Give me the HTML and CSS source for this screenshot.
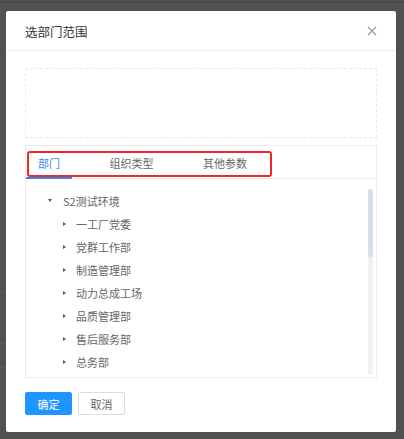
FILE: index.html
```html
<!DOCTYPE html>
<html lang="zh-CN">
<head>
<meta charset="utf-8">
<title>选部门范围</title>
<link rel="stylesheet" href="styles.css">
</head>
<body>
<div class="mask">
  <div class="dialog">
    <div class="dialog-header">
      <span class="dialog-title">选部门范围</span>
      <svg class="dialog-close" width="10" height="10" viewBox="0 0 10 10">
        <path d="M1 1 L9 9 M9 1 L1 9" stroke="#999" stroke-width="1.2" fill="none"/>
      </svg>
    </div>
    <div class="dialog-body">
      <div class="selected-box"></div>
      <div class="tabs">
        <div class="tab-nav">
          <div class="tab active">部门</div>
          <div class="tab">组织类型</div>
          <div class="tab">其他参数</div>
          <div class="tab-highlight"></div>
        </div>
        <div class="tab-pane">
          <ul class="tree">
            <li class="node root"><span class="caret down"></span><span class="label">S2测试环境</span></li>
            <li class="node child"><span class="caret right"></span><span class="label">一工厂党委</span></li>
            <li class="node child"><span class="caret right"></span><span class="label">党群工作部</span></li>
            <li class="node child"><span class="caret right"></span><span class="label">制造管理部</span></li>
            <li class="node child"><span class="caret right"></span><span class="label">动力总成工场</span></li>
            <li class="node child"><span class="caret right"></span><span class="label">品质管理部</span></li>
            <li class="node child"><span class="caret right"></span><span class="label">售后服务部</span></li>
            <li class="node child"><span class="caret right"></span><span class="label">总务部</span></li>
          </ul>
          <div class="scrollbar"><div class="scroll-thumb"></div></div>
        </div>
      </div>
    </div>
    <div class="dialog-footer">
      <button class="btn btn-primary">确定</button>
      <button class="btn">取消</button>
    </div>
  </div>
</div>
</body>
</html>
```
FILE: styles.css
```css
* { box-sizing: border-box; }
html, body {
  margin: 0;
  padding: 0;
  width: 404px;
  height: 439px;
  overflow: hidden;
}
body {
  font-family: "Noto Sans CJK SC", "Noto Sans", sans-serif;
  background: #515151;
}
.mask {
  width: 404px;
  height: 439px;
  padding: 11px 0 0 6px;
  background:
    linear-gradient(#464646, #464646) 0 2px / 404px 1px no-repeat,
    linear-gradient(#5a5a5a, #5a5a5a) 0 291px / 6px 1px no-repeat,
    linear-gradient(#5a5a5a, #5a5a5a) 0 343px / 6px 1px no-repeat,
    linear-gradient(#5a5a5a, #5a5a5a) 0 367px / 6px 1px no-repeat,
    #515151;
}
.dialog {
  width: 390px;
  height: 421px;
  background: #fff;
  border-radius: 2px;
  display: flex;
  flex-direction: column;
}
.dialog-header {
  height: 40px;
  padding: 1px 19px 0 19px;
  border-bottom: 1px solid #ececec;
  display: flex;
  align-items: center;
  justify-content: space-between;
}
.dialog-title {
  font-size: 12.5px;
  color: #333;
}
.dialog-close {
  display: block;
}
.dialog-body {
  padding: 17px 19px 0 19px;
}
.selected-box {
  height: 70px;
  border: 1px dashed #e8e8e8;
}
.tabs {
  margin-top: 7px;
  height: 233px;
  border: 1px solid #ececec;
  display: flex;
  flex-direction: column;
}
.tab-nav {
  position: relative;
  height: 33px;
  border-bottom: 1px solid #ececec;
  display: flex;
  align-items: stretch;
}
.tab {
  padding: 1px 12px 0 12px;
  margin-right: 25.5px;
  font-size: 11px;
  color: #666;
  display: flex;
  align-items: center;
}
.tab.active {
  color: #2d8cf0;
  box-shadow: inset 0 -2px 0 #2d8cf0;
  margin-bottom: -1px;
}
/* red outline drawn over the tab labels */
.tab-highlight {
  position: absolute;
  left: 1px;
  top: 5px;
  width: 245px;
  height: 26px;
  border: 2px solid #f0262d;
  border-radius: 3px;
}
.tab-pane {
  position: relative;
  flex: 1;
  overflow: hidden;
}
.tree {
  list-style: none;
  margin: 0;
  padding: 10px 0 0 0;
}
.node {
  height: 23px;
  display: flex;
  align-items: center;
  font-size: 11px;
  color: #666;
}
.node.root { padding-left: 22px; }
.node.child { padding-left: 37px; }
.caret {
  width: 0;
  height: 0;
}
.caret.down {
  border-left: 2.5px solid transparent;
  border-right: 2.5px solid transparent;
  border-top: 3.5px solid #555;
  margin-right: 11px;
}
.caret.right {
  border-top: 2.5px solid transparent;
  border-bottom: 2.5px solid transparent;
  border-left: 3.5px solid #555;
  margin-right: 10px;
}
.scrollbar {
  position: absolute;
  right: 3px;
  top: 10px;
  width: 5px;
  height: 186px;
  background: #f1f1f1;
  border-radius: 2px;
}
.scroll-thumb {
  height: 68px;
  background: #d9dfe8;
  border-radius: 2px;
}
.dialog-footer {
  padding: 14px 19px 0 19px;
  display: flex;
  gap: 6px;
}
.btn {
  width: 47px;
  height: 23px;
  font-family: "Noto Sans CJK SC", "Noto Sans", sans-serif;
  font-size: 11px;
  color: #666;
  background: #fff;
  border: 1px solid #dcdcdc;
  border-radius: 2px;
  padding: 0;
  cursor: pointer;
}
.btn-primary {
  background: #1e95ff;
  border-color: #1e95ff;
  color: #fff;
}
```
